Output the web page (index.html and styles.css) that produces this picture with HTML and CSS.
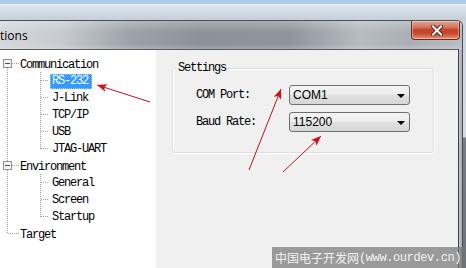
FILE: index.html
```html
<!DOCTYPE html>
<html>
<head>
<meta charset="utf-8">
<link rel="stylesheet" href="styles.css">
</head>
<body>
<div class="desk-top"></div>
<div class="desk-row">
  <div class="window">
    <div class="titlebar">
      <span class="title">tions</span>
      <div class="close-btn">
        <svg width="12" height="11" viewBox="0 0 12 11">
          <path d="M2 1.5 L10 9.5 M10 1.5 L2 9.5" stroke="#5a2418" stroke-width="4" stroke-linecap="square" fill="none"/>
          <path d="M2 1.5 L10 9.5 M10 1.5 L2 9.5" stroke="#ffffff" stroke-width="2" stroke-linecap="square" fill="none"/>
        </svg>
      </div>
    </div>
    <div class="frame-body">
      <div class="client">
        <div class="tree">
          <svg class="tree-lines" width="156" height="218" viewBox="0 0 156 218">
            <g stroke="#a0a0a0" stroke-width="1" stroke-dasharray="1 1" fill="none">
              <path d="M7.5 18 V111"/>
              <path d="M7.5 120 V184"/>
              <path d="M12 13.5 H19"/>
              <path d="M12 115.5 H19"/>
              <path d="M8 183.5 H19"/>
              <path d="M40.5 22 V99"/>
              <path d="M41 30.5 H49 M41 47.5 H49 M41 64.5 H49 M41 81.5 H49 M41 98.5 H49"/>
              <path d="M40.5 124 V167"/>
              <path d="M41 132.5 H49 M41 149.5 H49 M41 166.5 H49"/>
            </g>
            <g>
              <rect x="3.5" y="9.5" width="8" height="8" fill="#f4f4f4" stroke="#919191"/>
              <path d="M5 13.5 H10" stroke="#3d4f6b"/>
              <rect x="3.5" y="111.5" width="8" height="8" fill="#f4f4f4" stroke="#919191"/>
              <path d="M5 115.5 H10" stroke="#3d4f6b"/>
            </g>
          </svg>
          <div class="node root">Communication</div>
          <div class="node child"><span class="label selected">RS-232</span></div>
          <div class="node child"><span class="label">J-Link</span></div>
          <div class="node child"><span class="label">TCP/IP</span></div>
          <div class="node child"><span class="label">USB</span></div>
          <div class="node child"><span class="label">JTAG-UART</span></div>
          <div class="node root">Environment</div>
          <div class="node child"><span class="label">General</span></div>
          <div class="node child"><span class="label">Screen</span></div>
          <div class="node child"><span class="label">Startup</span></div>
          <div class="node root">Target</div>
        </div>
        <div class="panel">
          <div class="group">
            <span class="group-title">Settings</span>
            <div class="form">
              <span class="field-label">COM Port:</span>
              <div class="combo"><span class="combo-text">COM1</span><span class="combo-arrow"></span></div>
              <span class="field-label">Baud Rate:</span>
              <div class="combo"><span class="combo-text">115200</span><span class="combo-arrow"></span></div>
            </div>
          </div>
        </div>
      </div>
      <div class="frame-edge"></div>
    </div>
  </div>
  <div class="outside"></div>
</div>

<svg class="arrows" width="466" height="268" viewBox="0 0 466 268">
  <defs>
    <marker id="head" viewBox="0 0 10 8" refX="10" refY="4" markerWidth="10" markerHeight="8" markerUnits="userSpaceOnUse" orient="auto">
      <path d="M0 0 L10 4 L0 8 L2.5 4 Z" fill="#d0101c"/>
    </marker>
  </defs>
  <g stroke="#c0101c" stroke-width="1" fill="none">
    <path d="M150 102 L97 85" marker-end="url(#head)"/>
    <path d="M249 170 L281 89" marker-end="url(#head)"/>
    <path d="M283 172 L321 136" marker-end="url(#head)"/>
  </g>
</svg>

<div class="watermark"><span class="wm-cjk">中国电子开发网</span><span class="wm-latin">(www.ourdev.cn)</span></div>
</body>
</html>
```
FILE: styles.css
```css
html, body {
  margin: 0;
  padding: 0;
}
body {
  width: 466px;
  height: 268px;
  overflow: hidden;
  position: relative;
  background: #c9d3de;
  font-family: "Liberation Mono", monospace;
}
.desk-top {
  height: 20px;
  background:
    linear-gradient(to bottom, #b0cbea 0, #b0cbea 4px, #e6edf6 4px, #e6edf6 5px, #dde4ed 6px, #c6cfd9 20px);
}
.desk-row {
  display: flex;
  height: 248px;
}
.window {
  width: 462px;
  display: flex;
  flex-direction: column;
  border-top: 1px solid #4a5056;
  border-right: 1px solid #4a5056;
  border-top-right-radius: 6px;
  background: #a4abb2;
  overflow: hidden;
}
.titlebar {
  height: 28px;
  display: flex;
  align-items: flex-start;
  background:
    linear-gradient(to bottom, rgba(255,255,255,0.25) 0, rgba(255,255,255,0) 40%, rgba(255,255,255,0) 85%, rgba(255,255,255,0.2) 100%),
    linear-gradient(to right, #d4d8db 0, #c8ccd0 60px, #9ca3a9 130px, #8b939a 200px, #8e969d 290px, #b7bcc1 360px, #aab0b5 410px, #b9bec3 462px);
}
.title {
  font-family: "Open Sans", "Noto Sans", sans-serif;
  font-size: 12px;
  line-height: 16px;
  color: #000;
  margin-top: 7px;
  margin-left: 0;
}
.close-btn {
  margin-left: auto;
  margin-right: 2px;
  width: 47px;
  height: 18px;
  border: 1px solid #6e2a1f;
  border-top: none;
  border-radius: 0 0 4px 4px;
  background: linear-gradient(to bottom, #e3a595 0, #d2745f 35%, #c5402a 50%, #c84a30 70%, #e49576 100%);
  display: flex;
  align-items: center;
  justify-content: center;
  box-shadow: inset 0 0 0 1px rgba(255,255,255,0.35);
}
.close-btn svg {
  display: block;
  margin-left: 2px;
}
.frame-body {
  flex: 1;
  display: flex;
  min-height: 0;
}
.client {
  width: 458px;
  display: flex;
  border-top: 1px solid #565c62;
  border-right: 1px solid #3c4248;
  background: #f0f0f0;
}
.frame-edge {
  flex: 1;
  background: linear-gradient(to right, #c4c9ce, #a2a9af);
}
.outside {
  width: 3px;
  background: linear-gradient(to bottom, #c9d3de 0, #d5dbe1 117px, #767d84 118px, #6c737a 248px);
}
.tree {
  position: relative;
  width: 156px;
  background: #fff;
  padding-top: 5px;
  box-sizing: border-box;
}
.tree-lines {
  position: absolute;
  left: 0;
  top: 0;
}
.node {
  height: 15px;
  padding-top: 2px;
  line-height: 17px;
  font-size: 12px;
  letter-spacing: -1.2px;
  color: #000;
  white-space: nowrap;
}
.node.root {
  padding-left: 20px;
}
.node.child {
  padding-left: 50px;
}
.label {
  display: inline-block;
  line-height: 15px;
  padding: 0 4px 0 2px;
  vertical-align: top;
  margin-top: 0;
}
.label.selected {
  background: #3399ff;
  color: #fff;
  outline: 1px dotted #a8d0ff;
  outline-offset: -1px;
}
.panel {
  flex: 1;
  padding: 18px 0 0 16px;
}
.group {
  position: relative;
  width: 262px;
  height: 85px;
  box-sizing: border-box;
  border: 1px solid #d5dfe5;
  border-radius: 3px;
  box-shadow: inset 1px 1px 0 #ffffff, 1px 1px 0 #ffffff;
  padding: 16px 0 0 23px;
}
.group-title {
  position: absolute;
  top: -8px;
  left: 4px;
  padding: 0 1px;
  background: #f0f0f0;
  font-size: 12px;
  line-height: 15px;
  letter-spacing: -1.2px;
  color: #000;
}
.form {
  display: grid;
  grid-template-columns: 93px 121px;
  grid-auto-rows: 20px;
  row-gap: 7px;
  align-items: center;
}
.field-label {
  font-size: 12px;
  letter-spacing: -1.2px;
  color: #000;
  line-height: 15px;
}
.combo {
  height: 20px;
  box-sizing: border-box;
  border: 1px solid #707070;
  border-radius: 3px;
  background: linear-gradient(to bottom, #f4f4f4 0, #ececec 50%, #e0e0e0 51%, #d6d6d6 100%);
  display: flex;
  align-items: center;
  padding: 0 4px 0 3px;
}
.combo-text {
  flex: 1;
  font-family: "Liberation Sans Narrow", "Liberation Sans", sans-serif;
  font-size: 12px;
  color: #000;
  line-height: 14px;
}
.combo-arrow {
  width: 0;
  height: 0;
  border-left: 4px solid transparent;
  border-right: 4px solid transparent;
  border-top: 4px solid #000;
  margin-top: 1px;
}
.arrows {
  position: absolute;
  left: 0;
  top: 0;
  pointer-events: none;
}
.watermark {
  position: absolute;
  left: 272px;
  top: 247px;
  width: 191px;
  height: 21px;
  background: rgba(120,120,120,0.72);
  color: #f2f2f2;
  display: flex;
  align-items: center;
  padding-left: 3px;
  box-sizing: border-box;
  white-space: nowrap;
}
.wm-cjk {
  font-family: "Noto Sans CJK SC", sans-serif;
  font-size: 12px;
}
.wm-latin {
  font-family: "Liberation Mono", monospace;
  font-size: 12px;
  letter-spacing: -0.4px;
}
```
